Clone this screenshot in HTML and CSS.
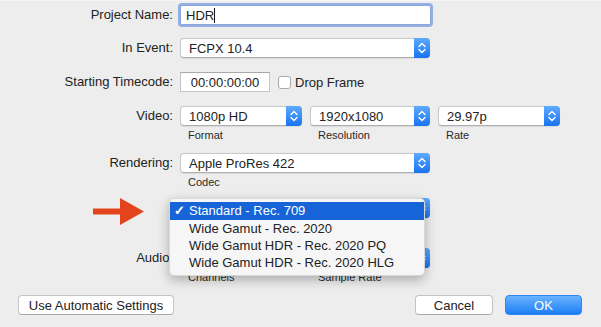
FILE: index.html
```html
<!DOCTYPE html>
<html lang="en">
<head>
  <meta charset="UTF-8">
  <title>Project Settings</title>
  <link rel="stylesheet" href="styles.css">
</head>
<body>

  <div class="dialog">

    <div class="row r-name">
      <div class="lbl">Project Name:</div>
      <div class="controls">
        <div class="field focus">HDR<span class="caret"></span></div>
      </div>
    </div>

    <div class="row r-event">
      <div class="lbl">In Event:</div>
      <div class="controls">
        <div class="popup wide">FCPX 10.4<span class="stepper"><svg width="16" height="18" viewBox="0 0 16 18"><polyline points="5,7.5 8,4.5 11,7.5" /><polyline points="5,10.5 8,13.5 11,10.5" /></svg></span></div>
      </div>
    </div>

    <div class="row r-tc">
      <div class="lbl">Starting Timecode:</div>
      <div class="controls">
        <div class="field tc">00:00:00:00</div>
        <label class="check"><span class="box"></span>Drop Frame</label>
      </div>
    </div>

    <div class="row r-video">
      <div class="lbl">Video:</div>
      <div class="controls">
        <div class="cell">
          <div class="popup w1">1080p HD<span class="stepper"><svg width="16" height="18" viewBox="0 0 16 18"><polyline points="5,7.5 8,4.5 11,7.5" /><polyline points="5,10.5 8,13.5 11,10.5" /></svg></span></div>
          <div class="sub">Format</div>
        </div>
        <div class="cell">
          <div class="popup w2">1920x1080<span class="stepper"><svg width="16" height="18" viewBox="0 0 16 18"><polyline points="5,7.5 8,4.5 11,7.5" /><polyline points="5,10.5 8,13.5 11,10.5" /></svg></span></div>
          <div class="sub">Resolution</div>
        </div>
        <div class="cell">
          <div class="popup w1">29.97p<span class="stepper"><svg width="16" height="18" viewBox="0 0 16 18"><polyline points="5,7.5 8,4.5 11,7.5" /><polyline points="5,10.5 8,13.5 11,10.5" /></svg></span></div>
          <div class="sub">Rate</div>
        </div>
      </div>
    </div>

    <div class="row r-render">
      <div class="lbl">Rendering:</div>
      <div class="controls">
        <div class="cell">
          <div class="popup wide">Apple ProRes 422<span class="stepper"><svg width="16" height="18" viewBox="0 0 16 18"><polyline points="5,7.5 8,4.5 11,7.5" /><polyline points="5,10.5 8,13.5 11,10.5" /></svg></span></div>
          <div class="sub">Codec</div>
        </div>
      </div>
    </div>

    <!-- colour space popup, covered by its open menu -->
    <div class="row r-color">
      <div class="lbl"></div>
      <div class="controls">
        <div class="popup wide"><span class="stepper"><svg width="16" height="18" viewBox="0 0 16 18"><polyline points="5,7.5 8,4.5 11,7.5" /><polyline points="5,10.5 8,13.5 11,10.5" /></svg></span></div>
      </div>
    </div>

    <div class="row r-audio">
      <div class="lbl">Audio:</div>
      <div class="controls">
        <div class="cell">
          <div class="popup w1"><span class="stepper"><svg width="16" height="18" viewBox="0 0 16 18"><polyline points="5,7.5 8,4.5 11,7.5" /><polyline points="5,10.5 8,13.5 11,10.5" /></svg></span></div>
          <div class="sub">Channels</div>
        </div>
        <div class="cell">
          <div class="popup w2"><span class="stepper"><svg width="16" height="18" viewBox="0 0 16 18"><polyline points="5,7.5 8,4.5 11,7.5" /><polyline points="5,10.5 8,13.5 11,10.5" /></svg></span></div>
          <div class="sub">Sample Rate</div>
        </div>
      </div>
    </div>

    <div class="buttons">
      <div class="btn auto">Use Automatic Settings</div>
      <div class="right">
        <div class="btn cancel">Cancel</div>
        <div class="btn ok">OK</div>
      </div>
    </div>

    <!-- callout arrow drawn on top of the screenshot -->
    <svg class="arrow" width="52" height="27" viewBox="0 0 52 27">
      <rect x="0" y="10.5" width="29" height="6" fill="#e4441b" />
      <polygon points="27,0 51,13.5 27,27" fill="#e4441b" />
    </svg>

    <!-- open colour space menu -->
    <div class="menu">
      <div class="item selected"><span class="tick">✓</span>Standard - Rec. 709</div>
      <div class="item">Wide Gamut - Rec. 2020</div>
      <div class="item">Wide Gamut HDR - Rec. 2020 PQ</div>
      <div class="item">Wide Gamut HDR - Rec. 2020 HLG</div>
    </div>

  </div>

</body>
</html>
```

FILE: styles.css
```css
body {
  margin: 0;
  background-color: #ededed;
  font-family: "Liberation Sans", Arial, sans-serif;
  font-size: 13px;
  color: #222222;
}

.dialog {
  position: relative;
  height: 327px;
  padding-top: 3px;
  box-sizing: border-box;
  overflow: hidden;
  border-top: 1px solid #f6f6f6;
}

.row {
  display: flex;
  align-items: flex-start;
}

.lbl {
  width: 173px;
  flex: none;
  text-align: right;
  line-height: 20px;
  white-space: nowrap;
}

.controls {
  display: flex;
  align-items: center;
  gap: 8px;
  margin-left: 7px;
}

/* row spacing */
.r-name { margin-top: 1px; }
.r-event { margin-top: 13px; }
.r-tc { margin-top: 14px; }
.r-video { margin-top: 14px; }
.r-render { margin-top: 11px; }
.r-color { margin-top: 9px; }
.r-audio { margin-top: 30px; }

.field {
  height: 20px;
  line-height: 20px;
  box-sizing: border-box;
  background: #ffffff;
  border: 1px solid #b9b9b9;
  padding-left: 5px;
}

.field.focus {
  width: 251px;
  border-color: #8ea6d8;
  box-shadow: 0 0 0 2px #93afe6;
  border-radius: 2px;
}

.caret {
  display: inline-block;
  width: 1px;
  height: 15px;
  background: #111111;
  vertical-align: -3px;
}

.field.tc {
  width: 90px;
  padding-left: 0;
  text-align: center;
  border-color: #c4c4c4;
  border-top-color: #a9a9a9;
}

.check {
  display: flex;
  align-items: center;
  gap: 4px;
}

.box {
  width: 13px;
  height: 13px;
  box-sizing: border-box;
  background: #ffffff;
  border: 1px solid #a9a9a9;
  border-radius: 3px;
}

.popup {
  position: relative;
  height: 20px;
  line-height: 19px;
  box-sizing: border-box;
  padding-left: 8px;
  background: #ffffff;
  border: 1px solid #c9c9c9;
  border-bottom-color: #adadad;
  border-radius: 4px;
  box-shadow: 0 0.5px 1px rgba(0, 0, 0, 0.08);
  white-space: nowrap;
}

.popup.wide { width: 250px; }
.popup.w1 { width: 122px; }
.popup.w2 { width: 120px; }

.stepper {
  position: absolute;
  top: -1px;
  right: -1px;
  width: 16px;
  height: 20px;
  border-radius: 0 4px 4px 0;
  background: linear-gradient(#5eaafd, #1873f0);
  display: flex;
  align-items: center;
  justify-content: center;
}

.stepper polyline {
  fill: none;
  stroke: #ffffff;
  stroke-width: 1.4;
  stroke-linecap: round;
  stroke-linejoin: round;
}

.sub {
  font-size: 11px;
  line-height: 14px;
  margin-top: 2px;
  padding-left: 8px;
  color: #2a2a2a;
}

.buttons {
  display: flex;
  justify-content: space-between;
  margin-top: 11px;
  padding: 0 19px 0 18px;
}

.right {
  display: flex;
  gap: 12px;
}

.btn {
  height: 20px;
  line-height: 19px;
  box-sizing: border-box;
  text-align: center;
  background: #ffffff;
  border: 1px solid #c4c4c4;
  border-bottom-color: #acacac;
  border-radius: 4px;
}

.btn.auto { width: 156px; }
.btn.cancel { width: 78px; }

.btn.ok {
  width: 77px;
  color: #ffffff;
  border-color: #2f85ec;
  background: linear-gradient(#6ab3ff, #1c7ef5);
}

.arrow {
  position: absolute;
  left: 93px;
  top: 197px;
}

.menu {
  position: absolute;
  left: 169px;
  top: 197px;
  width: 256px;
  box-sizing: border-box;
  padding: 3px 0 4px;
  background: #f6f6f6;
  border: 1px solid rgba(0, 0, 0, 0.12);
  border-radius: 5px;
  box-shadow: 0 4px 12px rgba(0, 0, 0, 0.28);
}

.item {
  position: relative;
  height: 17px;
  line-height: 17px;
  padding-left: 19px;
  white-space: nowrap;
}

.item.selected {
  height: 18px;
  line-height: 18px;
  color: #ffffff;
  background: #1664d7;
}

.tick {
  position: absolute;
  left: 4px;
  font-size: 13px;
  font-weight: bold;
}
```
